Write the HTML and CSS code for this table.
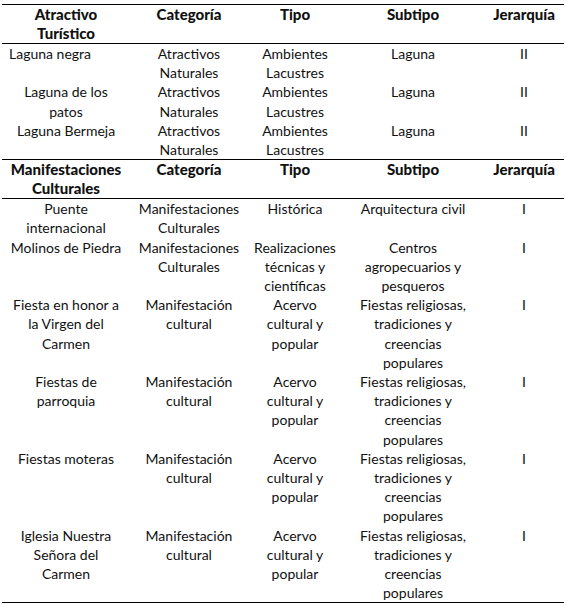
FILE: index.html
```html
<!DOCTYPE html>
<html lang="es">
<head>
<meta charset="utf-8">
<title>Atractivos turísticos</title>
<link rel="stylesheet" href="styles.css">
</head>
<body>
<div class="sheet">
  <table class="grid">
    <colgroup>
      <col class="c1"><col class="c2"><col class="c3"><col class="c4"><col class="c5">
    </colgroup>
    <thead>
      <tr>
        <th>Atractivo<br>Turístico</th>
        <th>Categoría</th>
        <th>Tipo</th>
        <th>Subtipo</th>
        <th>Jerarquía</th>
      </tr>
    </thead>
    <tbody>
      <tr>
        <td class="left">Laguna negra</td>
        <td>Atractivos<br>Naturales</td>
        <td>Ambientes<br>Lacustres</td>
        <td>Laguna</td>
        <td>II</td>
      </tr>
      <tr>
        <td>Laguna de los<br>patos</td>
        <td>Atractivos<br>Naturales</td>
        <td>Ambientes<br>Lacustres</td>
        <td>Laguna</td>
        <td>II</td>
      </tr>
      <tr>
        <td>Laguna Bermeja</td>
        <td>Atractivos<br>Naturales</td>
        <td>Ambientes<br>Lacustres</td>
        <td>Laguna</td>
        <td>II</td>
      </tr>
    </tbody>
  </table>
  <table class="grid second">
    <colgroup>
      <col class="c1"><col class="c2"><col class="c3"><col class="c4"><col class="c5">
    </colgroup>
    <thead>
      <tr>
        <th>Manifestaciones<br>Culturales</th>
        <th>Categoría</th>
        <th>Tipo</th>
        <th>Subtipo</th>
        <th>Jerarquía</th>
      </tr>
    </thead>
    <tbody>
      <tr>
        <td>Puente<br>internacional</td>
        <td>Manifestaciones<br>Culturales</td>
        <td>Histórica</td>
        <td>Arquitectura civil</td>
        <td>I</td>
      </tr>
      <tr>
        <td>Molinos de Piedra</td>
        <td>Manifestaciones<br>Culturales</td>
        <td>Realizaciones<br>técnicas y<br>científicas</td>
        <td>Centros<br>agropecuarios y<br>pesqueros</td>
        <td>I</td>
      </tr>
      <tr>
        <td>Fiesta en honor a<br>la Virgen del<br>Carmen</td>
        <td>Manifestación<br>cultural</td>
        <td>Acervo<br>cultural y<br>popular</td>
        <td>Fiestas religiosas,<br>tradiciones y<br>creencias<br>populares</td>
        <td>I</td>
      </tr>
      <tr>
        <td>Fiestas de<br>parroquia</td>
        <td>Manifestación<br>cultural</td>
        <td>Acervo<br>cultural y<br>popular</td>
        <td>Fiestas religiosas,<br>tradiciones y<br>creencias<br>populares</td>
        <td>I</td>
      </tr>
      <tr>
        <td>Fiestas moteras</td>
        <td>Manifestación<br>cultural</td>
        <td>Acervo<br>cultural y<br>popular</td>
        <td>Fiestas religiosas,<br>tradiciones y<br>creencias<br>populares</td>
        <td>I</td>
      </tr>
      <tr>
        <td>Iglesia Nuestra<br>Señora del<br>Carmen</td>
        <td>Manifestación<br>cultural</td>
        <td>Acervo<br>cultural y<br>popular</td>
        <td>Fiestas religiosas,<br>tradiciones y<br>creencias<br>populares</td>
        <td>I</td>
      </tr>
    </tbody>
  </table>
</div>
</body>
</html>
```

FILE: styles.css
```css
html, body {
  margin: 0;
  padding: 0;
  background: #ffffff;
}

body {
  font-family: "Lato", "Liberation Sans", sans-serif;
  font-size: 14px;
  color: #111111;
}

.sheet {
  padding: 4px 0 0 2px;
  width: 562px;
}

.grid {
  width: 562px;
  border-collapse: collapse;
  table-layout: fixed;
  border-top: 1px solid #000;
  border-bottom: 1px solid #000;
}

.grid.second {
  border-top: none;
}

.c1 { width: 128px; }
.c2 { width: 118px; }
.c3 { width: 94px; }
.c4 { width: 142px; }
.c5 { width: 80px; }

.grid th,
.grid td {
  padding: 0;
  text-align: center;
  vertical-align: top;
  line-height: 19.2px;
  white-space: nowrap;
}

.grid th {
  font-size: 15px;
  font-weight: 900;
  line-height: 19px;
  height: 38px;
  border-bottom: 1px solid #000;
}

.grid td.left {
  text-align: left;
  padding-left: 7px;
}
```
